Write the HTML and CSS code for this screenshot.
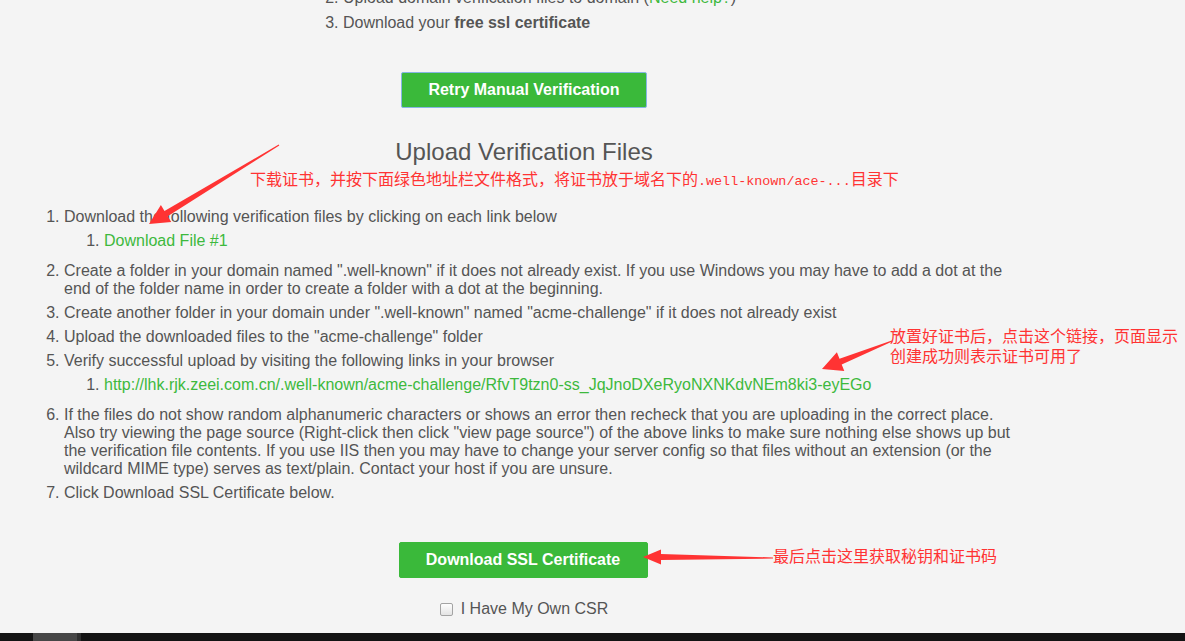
FILE: index.html
```html
<!DOCTYPE html>
<html lang="en">
<head>
<meta charset="utf-8">
<title>Upload Verification Files</title>
<link rel="stylesheet" href="styles.css">
</head>
<body>
<div class="page">
  <ol class="steps" start="2">
    <li>Upload domain verification files to domain (<a class="link" href="#">Need help?</a>)</li>
    <li>Download your <b>free ssl certificate</b></li>
  </ol>
  <div class="btn-row retry-row"><button class="btn btn-retry">Retry Manual Verification</button></div>
  <h2 class="title">Upload Verification Files</h2>
  <ol class="instructions">
    <li>Download the following verification files by clicking on each link below
      <ol class="sub">
        <li><a class="link" href="#">Download File #1</a></li>
      </ol>
    </li>
    <li>Create a folder in your domain named ".well-known" if it does not already exist. If you use Windows you may have to add a dot at the end of the folder name in order to create a folder with a dot at the beginning.</li>
    <li>Create another folder in your domain under ".well-known" named "acme-challenge" if it does not already exist</li>
    <li>Upload the downloaded files to the "acme-challenge" folder</li>
    <li>Verify successful upload by visiting the following links in your browser
      <ol class="sub">
        <li><a class="link" href="#">http://lhk.rjk.zeei.com.cn/.well-known/acme-challenge/RfvT9tzn0-ss_JqJnoDXeRyoNXNKdvNEm8ki3-eyEGo</a></li>
      </ol>
    </li>
    <li>If the files do not show random alphanumeric characters or shows an error then recheck that you are uploading in the correct place. Also try viewing the page source (Right-click then click "view page source") of the above links to make sure nothing else shows up but the verification file contents. If you use IIS then you may have to change your server config so that files without an extension (or the wildcard MIME type) serves as text/plain. Contact your host if you are unsure.</li>
    <li>Click Download SSL Certificate below.</li>
  </ol>
  <div class="btn-row dl-row"><button class="btn btn-dl">Download SSL Certificate</button></div>
  <div class="csr-row"><label class="csr"><input type="checkbox" class="check"><span>I Have My Own CSR</span></label></div>
</div>
<div class="taskbar"><div class="thumb"></div></div>

<div class="note note-1">下载证书，并按下面绿色地址栏文件格式，将证书放于域名下的<span class="mono">.well-known/ace-...</span>目录下</div>
<div class="note note-2"><div>放置好证书后，点击这个链接，页面显示</div><div>创建成功则表示证书可用了</div></div>
<div class="note note-3">最后点击这里获取秘钥和证书码</div>

<svg class="arrows" width="1185" height="641" viewBox="0 0 1185 641" xmlns="http://www.w3.org/2000/svg">
  <polygon points="278.7,144.5 164.5,211.0 160.9,205.1 149,224 171.3,222.1 167.7,216.2 279.3,145.5" fill="#ff3333"/>
  <polygon points="891.8,340.4 839.5,358.8 836.9,352.3 822,369 844.3,370.9 841.7,364.4 892.2,341.6" fill="#ff3333"/>
  <polygon points="773,557.4 661,554 661,549.5 643,557 661,564.5 661,560 773,558.6" fill="#ff3333"/>
</svg>
</body>
</html>
```

FILE: styles.css
```css
html, body {
  margin: 0;
  padding: 0;
}

body {
  background: #f4f4f4;
  font-family: "Liberation Sans", Arial, sans-serif;
  font-size: 16px;
  line-height: 18px;
  color: #555;
  height: 641px;
  display: flex;
  flex-direction: column;
  overflow: hidden;
  position: relative;
}

.page {
  flex: 1 1 auto;
  min-height: 0;
  width: 1000px;
  margin-left: 24px;
  display: flex;
  flex-direction: column;
}

ol {
  margin: 0;
  padding-left: 40px;
}

li {
  padding-bottom: 6px;
}

.steps {
  margin: -11px 0 0 279px;
}

.steps li:last-child {
  padding-top: 1px;
}

.steps b {
  font-weight: bold;
  color: #555;
}

.link {
  color: #3db93d;
  text-decoration: none;
}

.btn-row {
  display: flex;
  justify-content: center;
}

.retry-row {
  margin-top: 34px;
}

.btn {
  box-sizing: border-box;
  height: 36px;
  margin: 0;
  padding: 0;
  font-family: "Liberation Sans", Arial, sans-serif;
  font-size: 16px;
  font-weight: bold;
  line-height: 18px;
  color: #fff;
  background: #3ab93a;
  border: 1px solid #3ab93a;
  border-radius: 2px;
}

.btn-retry {
  width: 246px;
  border-color: #86b5e4;
}

.btn-dl {
  width: 249px;
  margin-left: -2px;
}

.title {
  margin: 30px 0 0;
  font-size: 24px;
  font-weight: normal;
  line-height: 28px;
  text-align: center;
  color: #555;
}

.instructions {
  margin-top: 42px;
}

.instructions .sub {
  margin-top: 6px;
  padding-left: 40px;
}

.dl-row {
  margin-top: 34px;
}

.csr-row {
  margin-top: 22px;
  display: flex;
  justify-content: center;
}

.csr {
  display: flex;
  align-items: center;
  gap: 8px;
  color: #555;
}

.check {
  appearance: none;
  -webkit-appearance: none;
  box-sizing: border-box;
  width: 13px;
  height: 13px;
  margin: 0;
  border: 1px solid #a3a3a3;
  border-radius: 2px;
  background: linear-gradient(#fdfdfd, #e4e4e4);
}

.taskbar {
  flex: none;
  height: 8px;
  background: #131313;
  display: flex;
}

.thumb {
  margin-left: 33px;
  width: 44px;
  height: 8px;
  background: #464646;
  border-right: 4px solid #2e2e2e;
}

.note {
  position: absolute;
  color: #ff3333;
  font-family: "Noto Sans CJK SC", "Liberation Sans", sans-serif;
  font-size: 16px;
  line-height: 20px;
  white-space: nowrap;
}

.mono {
  font-family: "Liberation Mono", "DejaVu Sans Mono", monospace;
  font-size: 13.4px;
}

.note-1 {
  left: 250px;
  top: 168px;
}

.note-2 {
  left: 890px;
  top: 325px;
  display: flex;
  flex-direction: column;
}

.note-3 {
  left: 773px;
  top: 545px;
}

.arrows {
  position: absolute;
  left: 0;
  top: 0;
  pointer-events: none;
}
```
